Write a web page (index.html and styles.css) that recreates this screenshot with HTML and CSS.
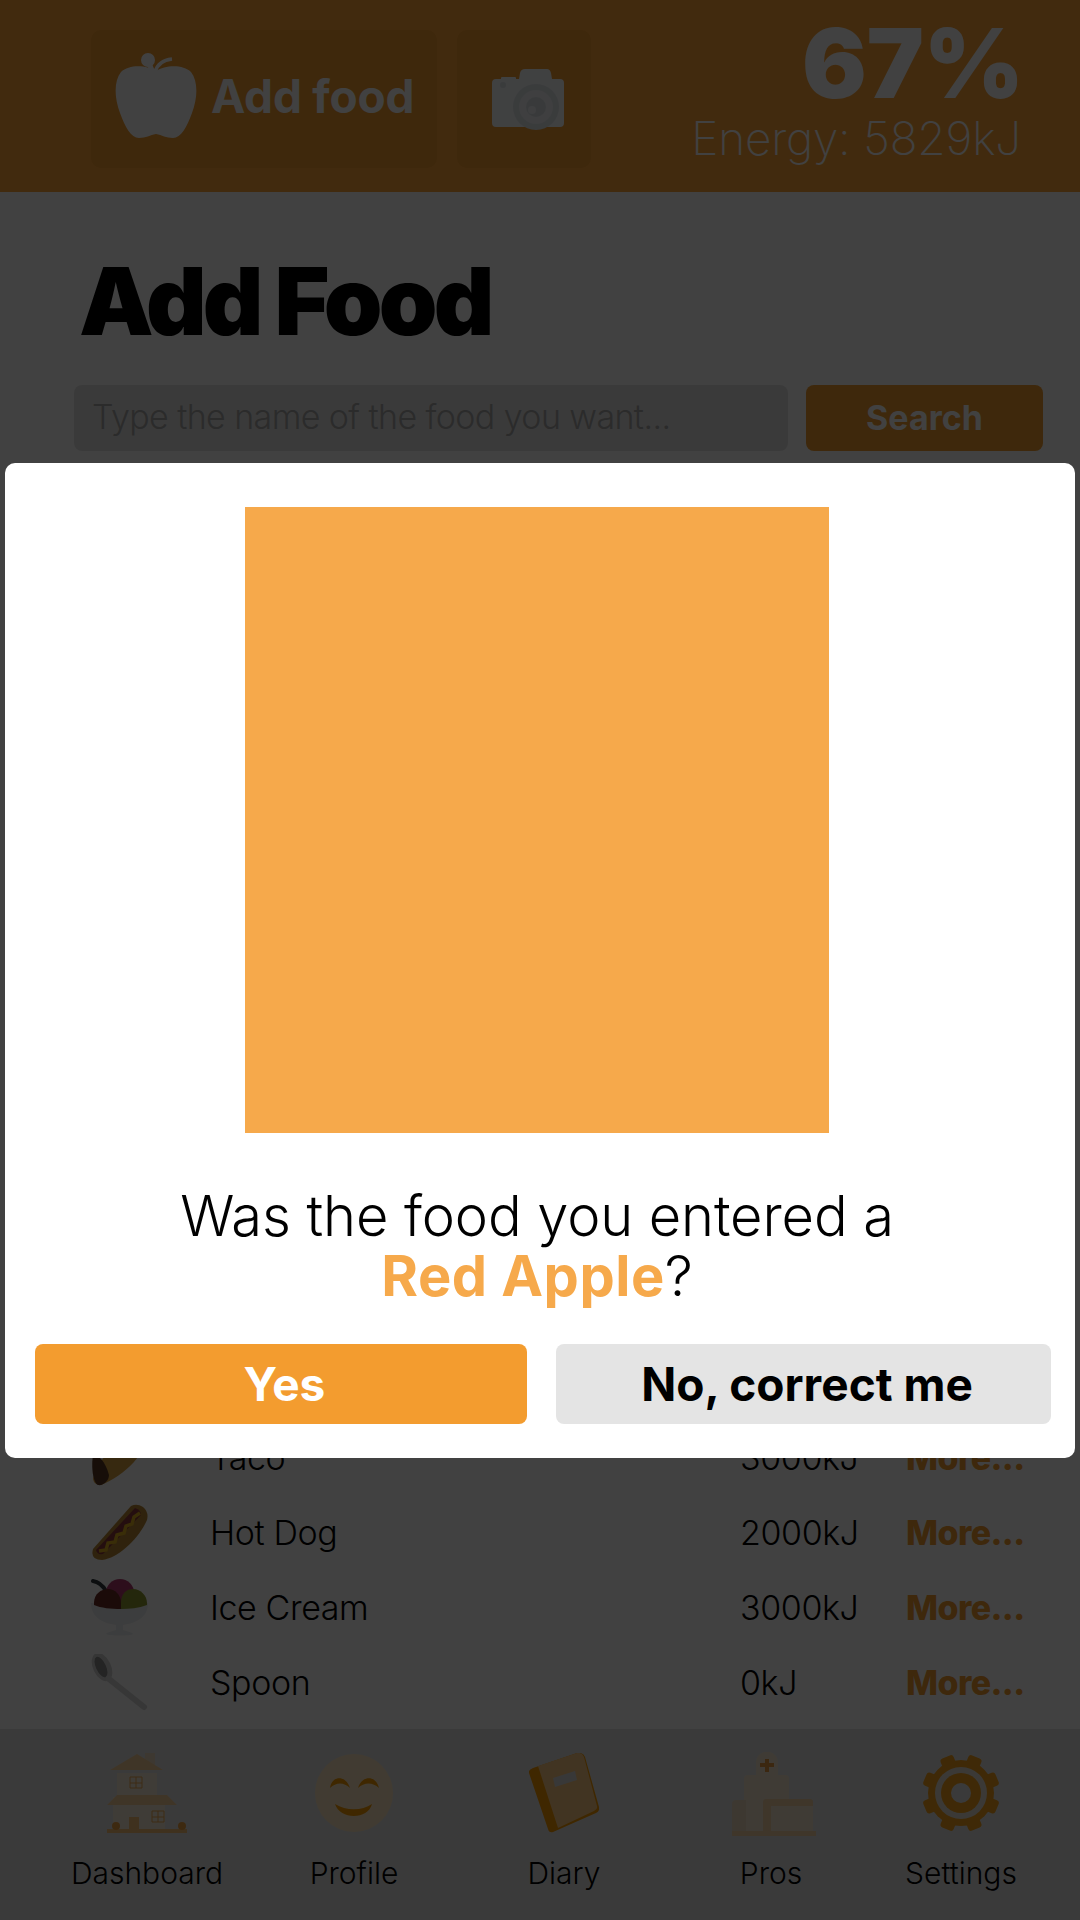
FILE: index.html
```html
<!DOCTYPE html>
<html>
<head lang="en">
    <meta charset="UTF-8">
    <title>Add Food</title>
    <link rel="stylesheet" href="styles.css">
</head>
<body>
<div id="page">
    <div id="top">
        <div class="top-btn add-btn">
            <svg class="apple" viewBox="0 0 82 85"><path fill="#fff" d="M41 18C32 12 14 11 6 19C-1 28-1 44 5 60C10 74 16 85 24 85C31 85 35 82 41 81C47 82 51 85 58 85C66 85 72 74 77 60C83 44 83 28 76 19C68 11 50 12 41 18Z"/><circle fill="#fff" cx="33" cy="7" r="7"/><path fill="none" stroke="#fff" stroke-width="5" d="M34 10L38 20"/><path fill="none" stroke="#fff" stroke-width="3.5" d="M40 19C42 12 48 7 57 6"/></svg>
            <span>Add food</span>
        </div>
        <div class="top-btn cam-btn">
            <svg class="camera" viewBox="0 0 72 62"><path fill="#fafdff" d="M4 10H9V9Q9 8 10 8H23Q24 8 24 9V10H27L28 4Q29 0 33 0H55Q58 0 59 4L60 10H68Q72 10 72 14V54Q72 58 68 58H4Q0 58 0 54V14Q0 10 4 10Z"/><circle fill="#e4e9ec" cx="44" cy="38" r="23"/><circle fill="#f5f8fa" cx="44" cy="38" r="17"/><circle fill="#dfe4e8" cx="44" cy="38" r="10"/><circle fill="#f5f8fa" cx="40" cy="41" r="4"/><circle fill="#e4e9ec" cx="11" cy="16" r="3"/></svg>
        </div>
        <div class="stats">
            <div class="percent">67%</div>
            <div class="energy">Energy: 5829kJ</div>
        </div>
    </div>

    <div id="main">
        <h1>Add Food</h1>
        <div class="search-row">
            <div class="search-box">Type the name of the food you want...</div>
            <div class="search-btn">Search</div>
        </div>
        <div class="food-list">
            <div class="food">
                <svg class="food-icon" viewBox="0 0 57 57"><path fill="#d9a040" d="M2 50C6 30 30 6 57 2C57 24 34 46 10 56Q3 56 2 50Z"/><path fill="#5a3a24" d="M2 26C8 26 14 32 18 46C18 52 12 57 7 56C2 54 0 38 2 26Z"/></svg>
                <div class="food-name">Taco</div>
                <div class="food-kj">3000kJ</div>
                <div class="food-more">More...</div>
            </div>
            <div class="food">
                <svg class="food-icon" viewBox="0 0 57 57"><path fill="#b88634" d="M2 45L40 2Q46-1 52 3Q58 8 56 16C48 34 28 54 11 56Q-1 56 2 45Z"/><path fill="#8f3a3c" d="M5 46L44 4Q50 6 50 11L12 50Q6 51 5 46Z"/><path fill="none" stroke="#e0b020" stroke-width="3.5" d="M8 47L15 46L17 39L24 38L26 31L33 29L35 22L41 20L43 13L49 9"/></svg>
                <div class="food-name">Hot Dog</div>
                <div class="food-kj">2000kJ</div>
                <div class="food-more">More...</div>
            </div>
            <div class="food">
                <svg class="food-icon" viewBox="0 0 57 57"><path fill="none" stroke="#30383e" stroke-width="4" stroke-linecap="round" d="M2 2C8 3 12 7 15 12"/><circle fill="#b03a70" cx="29" cy="14" r="14"/><path fill="#eceff1" d="M0 24H57C57 38 46 44 32 46V51C36 52 42 54 42 55C40 57 18 57 15 55C15 54 21 52 25 51V46C11 44 0 38 0 24Z"/><path fill="#6a2c24" d="M3 24C3 15 10 10 17 10C24 10 30 16 30 24L30 30C20 30 10 29 3 26Z"/><path fill="#8c9a30" d="M30 24C30 14 36 10 42 10C50 10 56 17 56 24V26C48 29 38 30 30 30Z"/></svg>
                <div class="food-name">Ice Cream</div>
                <div class="food-kj">3000kJ</div>
                <div class="food-more">More...</div>
            </div>
            <div class="food">
                <svg class="food-icon" viewBox="0 0 57 57"><ellipse fill="#d4d4d4" cx="11" cy="13" rx="9" ry="15" transform="rotate(-25 11 13)"/><ellipse fill="#8c8c8c" cx="10" cy="13" rx="5" ry="11" transform="rotate(-25 10 13)"/><path fill="none" stroke="#d8d8d8" stroke-width="6" stroke-linecap="round" d="M18 25L53 53"/></svg>
                <div class="food-name">Spoon</div>
                <div class="food-kj">0kJ</div>
                <div class="food-more">More...</div>
            </div>
        </div>
    </div>

    <div id="nav">
        <div class="nav-item">
            <svg class="nav-icon" viewBox="0 0 80 80"><path fill="#f8ecd8" d="M10 20H50V44H58V76H6V44H10Z"/><path fill="#f0dcc0" d="M38 0H48V14H38Z"/><path fill="#f8d09a" d="M3 17L30 1L56 17ZM0 52L10 42H60L70 52Z"/><path fill="#f8c078" d="M22 64H32V80H22ZM0 76H80V80H0Z"/><circle fill="#f0a040" cx="9" cy="73" r="4"/><circle fill="#f0a040" cx="75" cy="73" r="4"/><path fill="none" stroke="#f0a850" stroke-width="1" d="M23 24H35V35H23ZM29 24V35M23 30H35M45 58H57V69H45ZM51 58V69M45 64H57"/></svg>
            <div class="nav-label">Dashboard</div>
        </div>
        <div class="nav-item">
            <svg class="nav-icon" viewBox="0 0 80 80"><circle fill="#ffe7c2" cx="40" cy="40" r="39"/><path fill="#f59a00" d="M16 35C18 22 32 22 36 35C30 29 22 29 16 35ZM44 35C48 22 62 22 65 35C59 29 50 29 44 35ZM21 51C32 58 48 58 58 51C54 67 26 67 21 51Z"/></svg>
            <div class="nav-label">Profile</div>
        </div>
        <div class="nav-item">
            <svg class="nav-icon book" viewBox="0 0 70 80"><path fill="#f79a00" d="M4 15L48 0Q54-1 56 4L70 54Q71 58 67 60L24 79Q20 80 19 76L0 20Q-1 17 4 15Z"/><path fill="#ffcb85" d="M9 13L48 0Q53-1 55 4L68 53Q69 56 65 58L29 75Z"/><path fill="#dcdcdc" d="M24 25L46 18L48 27L26 34Z"/></svg>
            <div class="nav-label">Diary</div>
        </div>
        <div class="nav-item">
            <svg class="nav-icon pros" viewBox="0 0 84 84"><path fill="#f8e8d0" d="M24 23V11C24-4 46-4 46 11V23H53Q57 23 57 27V83H12V27Q12 23 16 23Z"/><path fill="#f0dcc0" d="M0 52Q0 48 4 48H14V83H0Z"/><path fill="#e89a40" d="M33 7H37V11H42V15H37V20H33V15H28V11H33Z"/><path fill="#f5d3a4" d="M31 50Q31 47 34 47H78Q81 47 81 50V83H31Z"/><path fill="#f8e8d0" d="M39 54H81V79H39Z"/><path fill="#f5d3a4" d="M0 79H84V84H0Z"/></svg>
            <div class="nav-label">Pros</div>
        </div>
        <div class="nav-item">
            <svg class="nav-icon" viewBox="0 0 80 80">
                <g fill="#f5a21d">
                    <circle cx="40" cy="40" r="33"/>
                    <rect x="33" y="1" width="14" height="20" rx="3" transform="rotate(22.5 40 40)"/>
                    <rect x="33" y="1" width="14" height="20" rx="3" transform="rotate(67.5 40 40)"/>
                    <rect x="33" y="1" width="14" height="20" rx="3" transform="rotate(112.5 40 40)"/>
                    <rect x="33" y="1" width="14" height="20" rx="3" transform="rotate(157.5 40 40)"/>
                    <rect x="33" y="1" width="14" height="20" rx="3" transform="rotate(202.5 40 40)"/>
                    <rect x="33" y="1" width="14" height="20" rx="3" transform="rotate(247.5 40 40)"/>
                    <rect x="33" y="1" width="14" height="20" rx="3" transform="rotate(292.5 40 40)"/>
                    <rect x="33" y="1" width="14" height="20" rx="3" transform="rotate(337.5 40 40)"/>
                </g>
                <circle fill="#e8e0d2" cx="40" cy="40" r="26"/><circle fill="#f5a21d" cx="40" cy="40" r="20"/><circle fill="#e4e4e4" cx="40" cy="40" r="10"/>
            </svg>
            <div class="nav-label">Settings</div>
        </div>
    </div>

    <!-- dialog over everything -->
    <div id="shade"></div>
    <div id="dialog">
        <div class="dialog-body">
            <div class="picture"></div>
            <p class="question">Was the food you entered a<br><b>Red Apple</b>?</p>
        </div>
        <div class="dialog-btns">
            <div class="btn yes">Yes</div>
            <div class="btn no">No, correct me</div>
        </div>
    </div>
</div>
</body>
</html>
```

FILE: styles.css
```css
*{
    margin:0;
    padding:0;
    box-sizing:border-box;
}
body{
    font-family:Inter,"Liberation Sans",sans-serif;
    color:#000;
    background:#fff;
}
#page{
    position:relative;
    width:1080px;
    height:1920px;
    display:flex;
    flex-direction:column;
    overflow:hidden;
}

/* top bar */
#top{
    height:192px;
    background:#ffa63a;
    display:flex;
    align-items:flex-start;
    padding:0 59px 0 91px;
    color:#fff;
}
.top-btn{
    height:138px;
    margin-top:30px;
    border-radius:10px;
    background:#f39c2f;
    display:flex;
    align-items:center;
}
.add-btn{
    width:346px;
    padding-left:24px;
    font-size:46px;
    font-weight:700;
    letter-spacing:-.2px;
}
.add-btn span{
    margin-left:14px;
    margin-top:-6px;
}
.apple{
    width:82px;
    height:85px;
    margin-top:-7px;
}
.cam-btn{
    width:134px;
    margin-left:20px;
    justify-content:center;
}
.camera{
    width:72px;
    height:62px;
    margin-top:2px;
    margin-left:7px;
}
.stats{
    margin-left:auto;
    padding-top:15px;
    text-align:right;
}
.percent{
    margin-right:-3px;
    font-size:96px;
    line-height:96px;
    font-weight:900;
}
.energy{
    margin-top:2px;
    font-size:46px;
    line-height:50px;
    font-weight:200;
    letter-spacing:-.2px;
}

/* main column */
#main{
    flex:1;
    display:flex;
    flex-direction:column;
    padding-top:59px;
}
h1{
    margin-left:79px;
    font-size:94px;
    line-height:100px;
    font-weight:900;
    letter-spacing:-3.8px;
}
.search-row{
    display:flex;
    height:66px;
    margin:34px 37px 0 74px;
    gap:18px;
}
.search-box{
    width:714px;
    padding-left:18px;
    border-radius:8px;
    background:#e4e4e4;
    color:#a8a8a8;
    font-size:34px;
    font-weight:300;
    line-height:64px;
    letter-spacing:-.6px;
}
.search-btn{
    flex:1;
    border-radius:8px;
    background:#f39c2f;
    color:#fff;
    font-size:34px;
    font-weight:700;
    line-height:66px;
    text-align:center;
}
.food-list{
    margin-top:auto;
    padding:0 0 9px 91px;
}
.food{
    display:grid;
    grid-template-columns:119px 530px 166px auto;
    align-items:center;
    height:75px;
    font-size:34px;
    font-weight:300;
    letter-spacing:-.4px;
}
.food-icon{
    width:57px;
    height:57px;
}
.food-more{
    color:#f39c2f;
    font-weight:800;
    letter-spacing:-.6px;
}

/* bottom nav */
#nav{
    height:191px;
    background:#e4e4e4;
    display:grid;
    grid-template-columns:206px 208px 212px 202px 178px;
    padding:24px 0 0 44px;
}
.nav-item{
    display:flex;
    flex-direction:column;
    align-items:center;
}
.nav-icon{
    width:80px;
    height:80px;
}
.nav-icon.book{
    width:70px;
}
.nav-icon.pros{
    width:84px;
    height:84px;
    margin:-1px 0 -3px 6px;
}
.nav-label{
    margin-top:22px;
    font-size:30px;
    line-height:36px;
    font-weight:300;
}

/* dialog */
#shade{
    position:absolute;
    left:0;
    top:0;
    width:100%;
    height:100%;
    background:rgba(0,0,0,.745);
}
#dialog{
    position:absolute;
    left:5px;
    top:463px;
    width:1070px;
    height:995px;
    padding-top:44px;
    border-radius:10px;
    background:#fff;
}
.dialog-body{
    padding-right:6px;
    text-align:center;
}
.picture{
    width:584px;
    height:626px;
    margin:0 auto;
    background:#f6a94b;
}
.question{
    margin-top:53px;
    font-size:56px;
    line-height:60px;
    font-weight:300;
    letter-spacing:-.1px;
}
.question b{
    color:#f6a94b;
    font-weight:700;
    letter-spacing:.5px;
}
.dialog-btns{
    display:flex;
    gap:29px;
    margin:38px 24px 0 30px;
}
.btn{
    height:80px;
    padding-left:7px;
    border-radius:8px;
    font-size:46px;
    font-weight:700;
    line-height:80px;
    text-align:center;
}
.yes{
    width:492px;
    background:#f39c2f;
    color:#fff;
}
.no{
    width:495px;
    background:#e4e4e4;
    color:#000;
}
```
